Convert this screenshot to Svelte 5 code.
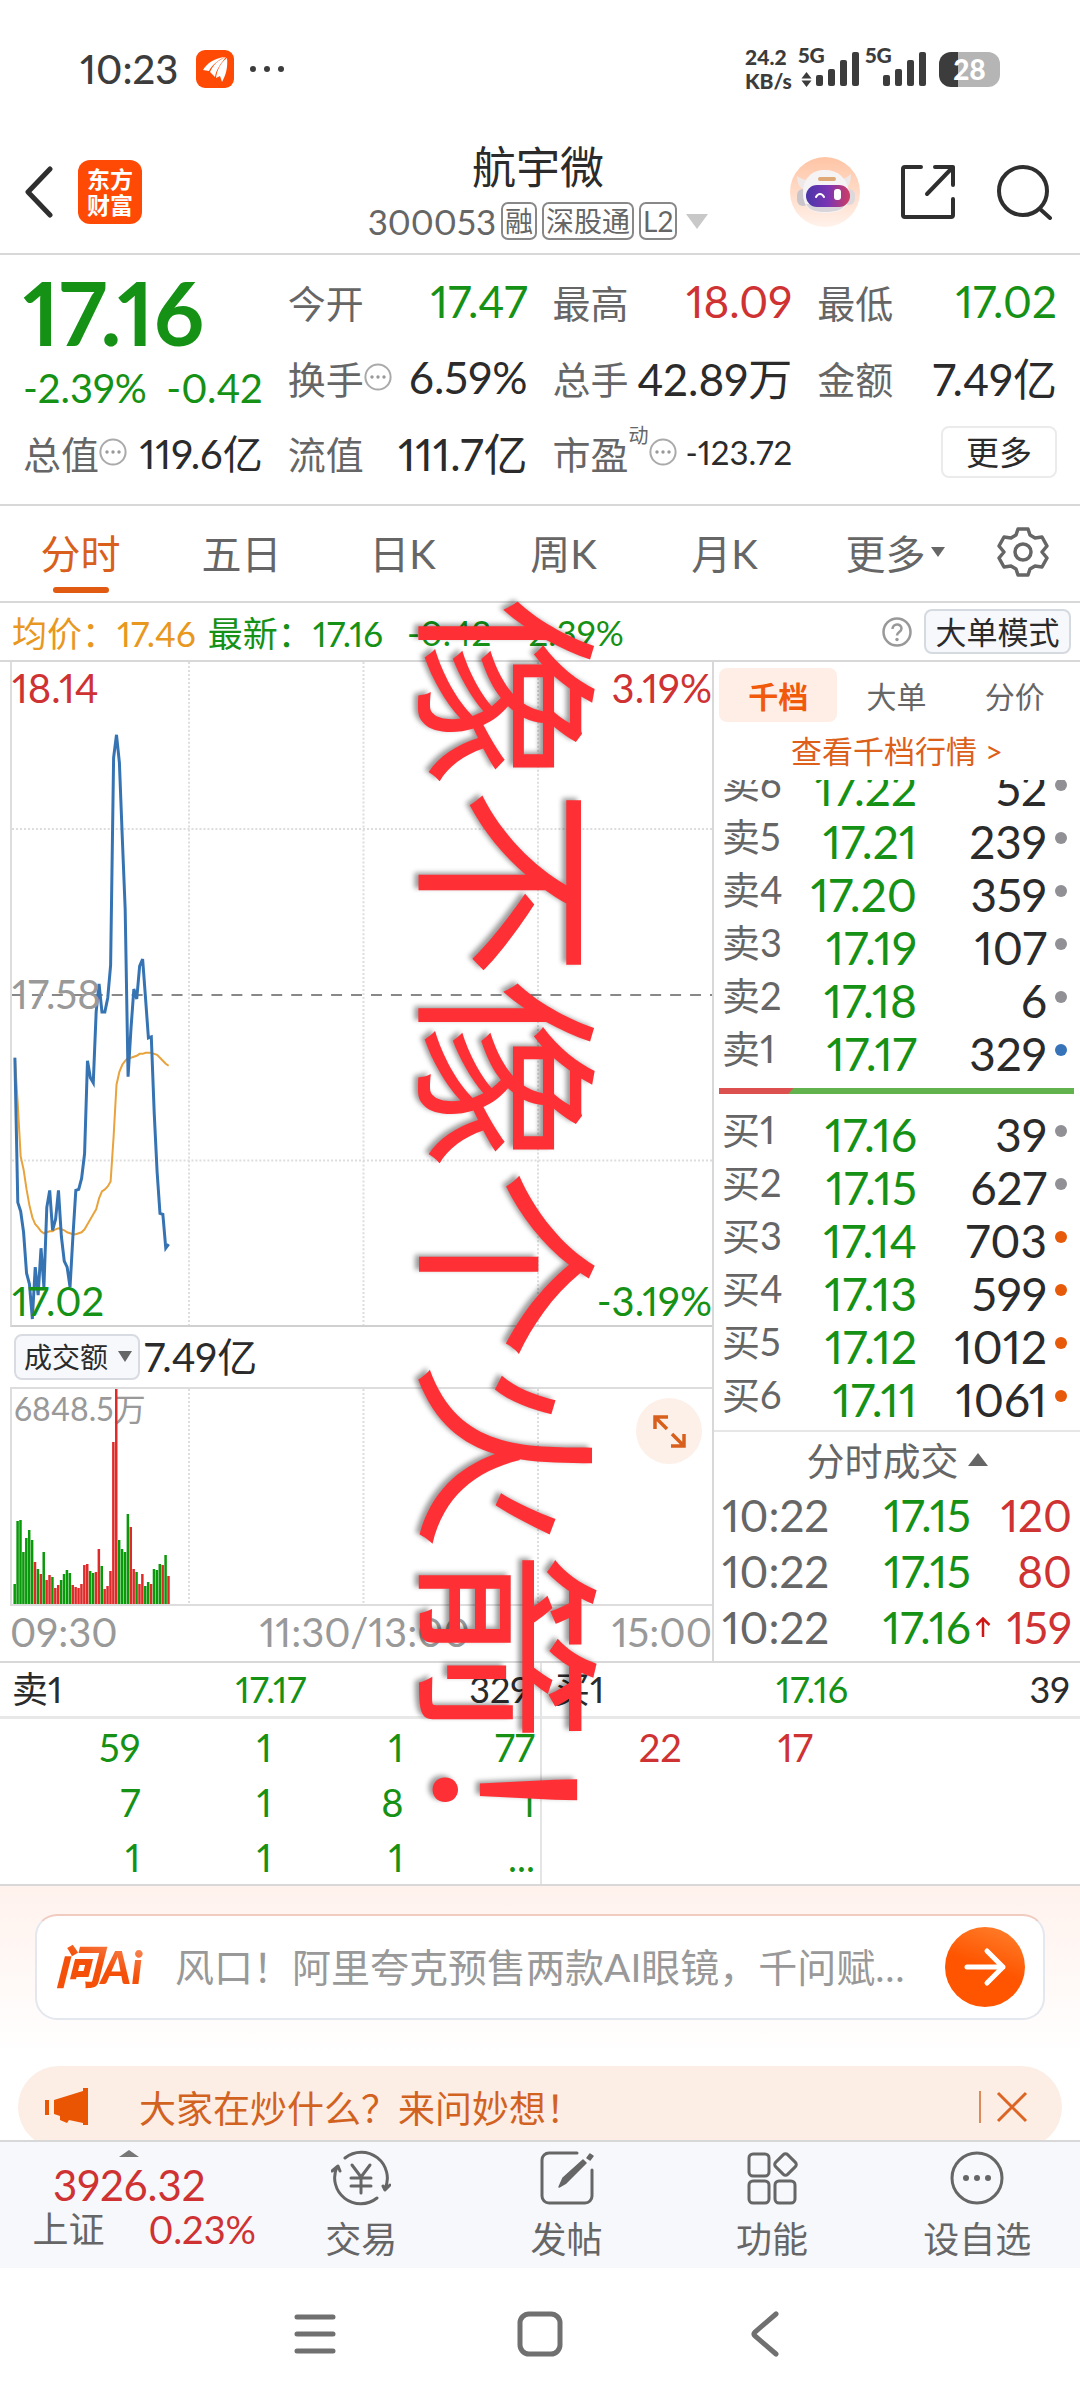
<script>
  const tabs = ["分时", "五日", "日K", "周K", "月K"];
  const sell = [
    { label: "卖6", price: "17.22", qty: 52, dot: "grey" },
    { label: "卖5", price: "17.21", qty: 239, dot: "grey" },
    { label: "卖4", price: "17.20", qty: 359, dot: "grey" },
    { label: "卖3", price: "17.19", qty: 107, dot: "grey" },
    { label: "卖2", price: "17.18", qty: 6, dot: "grey" },
    { label: "卖1", price: "17.17", qty: 329, dot: "blue" }
  ];
  const buy = [
    { label: "买1", price: "17.16", qty: 39, dot: "grey" },
    { label: "买2", price: "17.15", qty: 627, dot: "grey" },
    { label: "买3", price: "17.14", qty: 703, dot: "orange" },
    { label: "买4", price: "17.13", qty: 599, dot: "orange" },
    { label: "买5", price: "17.12", qty: 1012, dot: "orange" },
    { label: "买6", price: "17.11", qty: 1061, dot: "orange" }
  ];
  const trades = [
    { time: "10:22", price: "17.15", qty: 120 },
    { time: "10:22", price: "17.15", qty: 80 },
    { time: "10:22", price: "17.16", qty: 159, up: true }
  ];
  const sellQueue = [
    ["59", "1", "1", "77"],
    ["7", "1", "8", "1"],
    ["1", "1", "1", "..."]
  ];
  const buyQueue = [
    ["22", "17", "", ""],
    ["", "", "", ""],
    ["", "", "", ""]
  ];

  // one value per minute, measured down from the top of the chart
  const price = [
    397, 542, 551, 572, 613, 624, 659, 607, 635, 588, 627, 547, 530, 570, 559, 530, 576, 601, 607,
    627, 576, 530, 529, 518, 493, 400, 417, 422, 351, 323, 351, 351, 337, 304, 96, 73, 101, 176, 248,
    416, 368, 328, 338, 305, 298, 337, 377, 376, 452, 511, 553, 554, 588, 584
  ];
  const average = [
    397, 444, 496, 509, 529, 545, 557, 564, 567, 571, 573, 572, 571, 571, 569, 568, 569, 570, 572,
    573, 574, 574, 573, 572, 569, 564, 559, 554, 549, 538, 531, 529, 526, 521, 476, 424, 411, 404,
    400, 397, 397, 396, 395, 393, 393, 392, 392, 392, 393, 394, 397, 400, 403, 405
  ];
  const volume = [
    20, 83, 84, 52, 66, 74, 64, 42, 35, 30, 52, 24, 29, 27, 16, 19, 24, 30, 34, 31, 19, 17, 16, 20,
    39, 40, 33, 31, 32, 55, 38, 15, 18, 33, 162, 215, 64, 55, 52, 90, 77, 35, 32, 20, 30, 18, 22, 20,
    35, 34, 40, 39, 49, 28
  ];
  const direction = "gggggggrgrgrrgrrggggrrrrrrggrrgrrrrrggggrrgrrggrgggrgr";

  const minute = 2.91;
  const line = (values) => values.map((v, i) => `${((i + 1) * minute).toFixed(1)},${v}`).join(" ");
</script>

{#snippet more()}
  <svg class="info" viewBox="0 0 28 28" aria-hidden="true">
    <circle cx="14" cy="14" r="12.6" fill="none" stroke="#aaa" stroke-width="2" />
    <g fill="#999"><circle cx="8" cy="14" r="1.7" /><circle cx="14" cy="14" r="1.7" /><circle cx="20" cy="14" r="1.7" /></g>
  </svg>
{/snippet}

{#snippet book(rows)}
  <table class="book">
    <tbody>
      {#each rows as row}
        <tr>
          <th scope="row">{row.label}</th>
          <td class="green">{row.price}</td>
          <td>{row.qty}</td>
          <td class="dot-cell"><i class="dot {row.dot}"></i></td>
        </tr>
      {/each}
    </tbody>
  </table>
{/snippet}

{#snippet queue(label, value, qty, rows, color)}
  <div class="queue">
    <div class="queue-head">
      <span>{label}</span><span class="green">{value}</span><span>{qty}</span>
    </div>
    <table class={color}>
      <tbody>
        {#each rows as row}
          <tr>
            {#each row as cell}<td>{cell}</td>{/each}
          </tr>
        {/each}
      </tbody>
    </table>
  </div>
{/snippet}

<div class="page">
  <div class="status">
    <span class="clock">10:23</span>
    <svg class="app-badge" viewBox="0 0 38 38" aria-hidden="true">
      <rect width="38" height="38" rx="9" fill="#ff4a05" />
      <path d="M7 20C11 13 19 8 29 7 22 10 16 15 13 21zM14 22C17 15 22 10 30 7 25 13 20 20 19 27zM20 28C21 20 25 12 31 8 32 17 30 25 26 32L24 26z" fill="#fff" />
    </svg>
    <span class="dots"><i></i><i></i><i></i></span>
    <span class="speed">24.2<br />KB/s</span>
    <svg class="signal" viewBox="0 0 62 42" aria-hidden="true">
      <g fill="#3c3c3c">
        <path d="M8.500 24l5 6.500h-10zM8.500 39l5-6.500h-10z" />
        <rect x="18" y="27" width="7" height="11" rx="2" /><rect x="30" y="21" width="7" height="17" rx="2" />
        <rect x="42" y="12" width="7" height="26" rx="2" /><rect x="54" y="4" width="7" height="34" rx="2" />
      </g>
      <text x="0" y="15">5G</text>
    </svg>
    <svg class="signal second" viewBox="0 0 62 42" aria-hidden="true">
      <g fill="#3c3c3c">
        <rect x="18" y="27" width="7" height="11" rx="2" /><rect x="30" y="21" width="7" height="17" rx="2" />
        <rect x="42" y="12" width="7" height="26" rx="2" /><rect x="54" y="4" width="7" height="34" rx="2" />
      </g>
      <text x="0" y="15">5G</text>
    </svg>
    <span class="battery">28</span>
  </div>

  <header>
    <button class="back" aria-label="返回">
      <svg viewBox="0 0 30 52"><path d="M26 3L4 26l22 23" fill="none" stroke="#2f2f2f" stroke-width="5" stroke-linecap="round" stroke-linejoin="round" /></svg>
    </button>
    <a class="brand" href="#home">东方<br />财富</a>
    <div class="title">
      <h1>航宇微</h1>
      <div class="code">
        <span>300053</span><b>融</b><b>深股通</b><b>L2</b><i></i>
      </div>
    </div>
    <div class="actions">
      <button aria-label="助手">
        <svg width="70" height="70" viewBox="0 0 70 70">
          <defs>
            <linearGradient id="halo" x1="0" y1="0" x2="0" y2="1"><stop offset="0" stop-color="#ffc4a4" /><stop offset="1" stop-color="#fff2eb" /></linearGradient>
            <linearGradient id="visor"><stop offset="0" stop-color="#4a35a8" /><stop offset=".5" stop-color="#7a35b4" /><stop offset="1" stop-color="#cf3d62" /></linearGradient>
          </defs>
          <circle cx="35" cy="35" r="35" fill="url(#halo)" />
          <path d="M7 19c0 8 3 12 7 13l4-9c-5 0-8-2-11-4zM61 17c0 8-2 13-6 14l-5-9c5 0 8-2 11-5z" fill="#eee8e8" />
          <rect x="7" y="32" width="12" height="17" rx="6" fill="#c9c5cb" /><rect x="53" y="32" width="12" height="16" rx="6" fill="#dcd8dc" />
          <path d="M13 36c0-15 9-23 22-23s22 8 24 22c1 14-6 21-24 21-15 0-22-6-22-20z" fill="#f6f3f4" />
          <path d="M16 47c3 6 9 8 19 8s17-2 20-7z" fill="#d8d4d9" />
          <rect x="28" y="20" width="18" height="4" rx="2" fill="#dfa977" />
          <rect x="16" y="28" width="44" height="22" rx="11" fill="url(#visor)" />
          <path d="M26 40c2-4 6-4 8 0" fill="none" stroke="#fff" stroke-width="2" stroke-linecap="round" />
          <rect x="44" y="32" width="7" height="11" rx="3" fill="#fff" />
        </svg>
      </button>
      <button aria-label="分享">
        <svg width="56" height="56" viewBox="0 0 56 56" fill="none" stroke="#2f2f2f" stroke-width="4" stroke-linecap="round" stroke-linejoin="round">
          <path d="M21 3H5a2 2 0 0 0-2 2v46a2 2 0 0 0 2 2h46a2 2 0 0 0 2-2V35M35 3h18v18M53 3L27 30" />
        </svg>
      </button>
      <button aria-label="搜索">
        <svg width="56" height="56" viewBox="0 0 56 56" fill="none" stroke="#2f2f2f" stroke-width="4" stroke-linecap="round">
          <circle cx="27" cy="27" r="24" /><path d="M44 45l10 9" />
        </svg>
      </button>
    </div>
  </header>

  <section class="quote">
    <div class="last green">
      <strong>17.16</strong>
      <div><span>-2.39%</span><span>-0.42</span></div>
    </div>
    <div class="item"><span>今开</span><b class="green">17.47</b></div>
    <div class="item"><span>最高</span><b class="red">18.09</b></div>
    <div class="item"><span>最低</span><b class="green">17.02</b></div>
    <div class="item"><span>换手{@render more()}</span><b>6.59%</b></div>
    <div class="item"><span>总手</span><b>42.89万</b></div>
    <div class="item"><span>金额</span><b>7.49亿</b></div>
    <div class="item"><span>总值{@render more()}</span><b class="mid">119.6亿</b></div>
    <div class="item"><span>流值</span><b>111.7亿</b></div>
    <div class="item"><span>市盈<sup>动</sup>{@render more()}</span><b class="small">-123.72</b></div>
    <div class="item end"><button>更多</button></div>
  </section>

  <nav class="tabs">
    {#each tabs as tab, i}
      <button class:active={i === 0}>{tab}</button>
    {/each}
    <button>更多<i></i></button>
    <button aria-label="设置">
      <svg width="52" height="52" viewBox="0 0 52 52" fill="none" stroke="#666" stroke-width="3.500" stroke-linejoin="round">
        <path d="M21 3h10l2 6 5 3 7-1 5 9-5 6 5 6-5 9-7-1-5 3-2 6H21l-2-6-5-3-7 1-5-9 5-6-5-6 5-9 7 1 5-3z" />
        <circle cx="26" cy="26" r="8" />
      </svg>
    </button>
  </nav>

  <div class="summary">
    <span class="avg">均价：17.46</span>
    <span class="green">最新：17.16</span>
    <span class="green diff">-0.42</span>
    <span class="green diff">-2.39%</span>
    <svg class="help" viewBox="0 0 30 30" aria-hidden="true">
      <circle cx="15" cy="15" r="13.500" fill="none" stroke="#999" stroke-width="2.500" />
      <path d="M10.500 12c0-6 9-6 9-.5 0 3.500-4.500 3.500-4.500 7" fill="none" stroke="#999" stroke-width="2.500" /><circle cx="15" cy="22.500" r="1.700" fill="#999" />
    </svg>
    <button>大单模式</button>
  </div>

  <main>
    <section class="charts">
      <div class="price-chart">
        <svg viewBox="0 0 702 665" preserveAspectRatio="none" role="img" aria-label="分时走势">
          <g stroke="#ddd" stroke-width="2" stroke-dasharray="2 2">
            <path d="M177.500 0V665M352.500 0V665M527.500 0V665M0 167.500H702M0 500H702" />
          </g>
          <path d="M0 334H702" stroke="#888" stroke-width="2" stroke-dasharray="11 9" />
          <polyline points={line(average)} fill="none" stroke="#e8a33c" stroke-width="2" />
          <polyline points={line(price)} fill="none" stroke="#3673b3" stroke-width="3" />
        </svg>
        <span class="top left red">18.14</span>
        <span class="top right red">3.19%</span>
        <span class="middle left">17.58</span>
        <span class="bottom left green">17.02</span>
        <span class="bottom right green">-3.19%</span>
      </div>
      <div class="metric">
        <label>
          <select aria-label="指标"><option>成交额</option></select>
          <i></i>
        </label>
        <span>7.49亿</span>
      </div>
      <div class="volume-chart">
        <span>6848.5万</span>
        <svg viewBox="0 0 702 215" preserveAspectRatio="none" role="img" aria-label="成交额">
          <path d="M177.500 0V215M352.500 0V215M527.500 0V215" stroke="#ddd" stroke-width="2" stroke-dasharray="2 2" />
          {#each volume as v, i}
            <rect x={(i + 0.5) * minute} y={215 - v} width="2.500" height={v} fill={direction[i] === "g" ? "#0a990a" : "#e02a2a"} />
          {/each}
        </svg>
        <button aria-label="全屏">
          <svg viewBox="0 0 66 66" fill="none" stroke="#d9601c" stroke-width="3.500">
            <path d="M19 31V19h13M19 19l12 12M35 48h13V36M48 48L36 36" />
          </svg>
        </button>
      </div>
      <div class="axis"><span>09:30</span><span>11:30/13:00</span><span>15:00</span></div>
    </section>

    <section class="depth">
      <div class="depth-tabs">
        <button class="active">千档</button>
        <button>大单</button>
        <button>分价</button>
      </div>
      <a class="depth-link" href="#depth">查看千档行情 &gt;</a>
      <div class="sell">{@render book(sell)}</div>
      <div class="ratio"><i></i></div>
      {@render book(buy)}
      <button class="trades-head">分时成交<i></i></button>
      <table class="trades">
        <tbody>
          {#each trades as trade}
            <tr>
              <td>{trade.time}</td>
              <td class="green">{trade.price}</td>
              <td class="arrow">
                {#if trade.up}
                  <svg viewBox="0 0 16 22" aria-label="上涨"><path d="M8 21V3M1.500 9L8 2.500 14.500 9" fill="none" stroke="#d01515" stroke-width="2.500" /></svg>
                {/if}
              </td>
              <td class="red">{trade.qty}</td>
            </tr>
          {/each}
        </tbody>
      </table>
    </section>
  </main>

  <section class="queues">
    {@render queue("卖1", "17.17", 329, sellQueue, "green")}
    {@render queue("买1", "17.16", 39, buyQueue, "red")}
  </section>

  <section class="ask">
    <form>
      <span class="ask-logo">问Ai</span>
      <input type="text" aria-label="提问" placeholder="风口！阿里夸克预售两款AI眼镜，千问赋能新一代智能终端" />
      <button type="button" aria-label="发送">
        <svg viewBox="0 0 80 80" fill="none" stroke="#fff" stroke-width="5" stroke-linecap="round" stroke-linejoin="round"><path d="M22 40h36M42 24l16 16-16 16" /></svg>
      </button>
    </form>
    <div class="notice">
      <svg width="44" height="38" viewBox="0 0 44 38" aria-hidden="true">
        <path d="M0 12h4v15H0zM9 12l29-9V0h5v37h-5v-2l-14-3-2 3-7-3v-4l-6-2z" fill="#ea5504" />
      </svg>
      <span>大家在炒什么？来问妙想！</span>
      <button aria-label="关闭">
        <svg width="32" height="32" viewBox="0 0 32 32"><path d="M2 2l28 28M30 2L2 30" stroke="#dc6526" stroke-width="3" /></svg>
      </button>
    </div>
  </section>

  <footer>
    <a class="index" href="#index">
      <i></i>
      <span class="red points">3926.32</span>
      <span class="change">上证<span class="red">0.23%</span></span>
    </a>
    <button>
      <svg viewBox="0 0 60 56">
        <path d="M14 8A26 26 0 0 1 54 39M46 48A26 26 0 0 1 6 17M1 21l6-5 2 5M59 35l-5 5-2-4" />
        <path d="M21 15l9 12 9-12M30 27v16M20 28h20M20 36h20" />
      </svg>
      交易
    </button>
    <button>
      <svg viewBox="0 0 60 56">
        <path d="M40 3H12a7 7 0 0 0-7 7v36a7 7 0 0 0 7 7h36a7 7 0 0 0 7-7V20" />
        <path d="M22 37l4-9 20-18 3 3-20 20zM50 8l3-4 3 2-3 4z" fill="#666" stroke-width="1.500" />
      </svg>
      发帖
    </button>
    <button>
      <svg viewBox="0 0 60 56">
        <rect x="7" y="4" width="20" height="22" rx="4" /><rect x="7" y="31" width="20" height="22" rx="4" /><rect x="33" y="31" width="20" height="22" rx="4" />
        <rect x="35" y="6" width="17" height="17" rx="3" transform="rotate(45 43.500 14.500)" />
      </svg>
      功能
    </button>
    <button>
      <svg viewBox="0 0 60 56">
        <circle cx="30" cy="28" r="25" />
        <g fill="#666" stroke="none"><circle cx="19" cy="28" r="3" /><circle cx="30" cy="28" r="3" /><circle cx="41" cy="28" r="3" /></g>
      </svg>
      设自选
    </button>
  </footer>

  <div class="system">
    <button aria-label="最近任务"><svg viewBox="0 0 48 48"><path d="M6 7h36M6 24h36M6 41h36" /></svg></button>
    <button aria-label="主屏幕"><svg viewBox="0 0 48 48"><rect x="4" y="4" width="40" height="40" rx="9" /></svg></button>
    <button aria-label="后退"><svg viewBox="0 0 48 48"><path d="M35 4L14 22q-2 2 0 4L35 44" /></svg></button>
  </div>

  <div class="caption">像不像个火箭！</div>
</div>

<style>
  :global(body) {
    background: #fff;
  }

  .page {
    position: relative;
    font-family: Lato, "Noto Sans CJK SC", sans-serif;
    font-variant-numeric: proportional-nums;
    color: #2b2b2b;
    overflow: hidden;
  }

  button {
    font: inherit;
    color: inherit;
    background: none;
    border: 0;
    padding: 0;
    margin: 0;
  }

  a {
    color: inherit;
    text-decoration: none;
  }

  svg {
    display: block;
  }

  table {
    border-collapse: collapse;
    table-layout: fixed;
    width: 100%;
  }

  th,
  td {
    padding: 0;
    font-weight: 400;
    text-align: right;
  }

  .green {
    color: #159115;
  }
  .red {
    color: #cf3232;
  }

  /* status bar */
  .status {
    height: 138px;
    box-sizing: border-box;
    padding: 0 80px;
    display: flex;
    align-items: center;
    color: #3c3c3c;
  }
  .clock {
    font-size: 40px;
    font-weight: 500;
  }
  .app-badge {
    width: 38px;
    height: 38px;
    margin-left: 18px;
  }
  .dots {
    display: flex;
    gap: 8px;
    margin-left: 16px;
  }
  .dots i {
    width: 6px;
    height: 6px;
    border-radius: 50%;
    background: #3c3c3c;
  }
  .speed {
    margin-left: auto;
    font-size: 21px;
    font-weight: 900;
    line-height: 24px;
    width: 53px;
  }
  .signal {
    width: 62px;
    height: 42px;
    margin-right: 5px;
    overflow: visible;
  }
  .signal.second {
    margin-right: 12px;
  }
  .signal text {
    font-size: 21px;
    font-weight: 900;
    fill: #3c3c3c;
  }
  .battery {
    width: 61px;
    height: 35px;
    border-radius: 12px;
    background: linear-gradient(90deg, #3c3c3c 19px, #b5b5b5 19px);
    color: #fff;
    font-size: 28px;
    font-weight: 900;
    line-height: 35px;
    text-align: center;
  }

  /* title bar */
  header {
    display: grid;
    grid-template-areas: "left title right";
    grid-template-columns: 1fr auto 1fr;
    align-items: center;
    height: 103px;
    padding: 0 28px 12px 24px;
    border-bottom: 2px solid #d8d8d8;
  }
  .back {
    grid-area: left;
    justify-self: start;
  }
  .back svg {
    width: 30px;
    height: 52px;
  }
  .brand {
    grid-area: left;
    justify-self: start;
    margin-left: 54px;
    width: 64px;
    height: 64px;
    box-sizing: border-box;
    padding-top: 6px;
    border-radius: 12px;
    background: #ff4a05;
    color: #fff;
    font-size: 23px;
    font-weight: 700;
    line-height: 26px;
    text-align: center;
  }
  .title {
    grid-area: title;
    text-align: center;
  }
  h1 {
    margin: 0;
    font-size: 44px;
    font-weight: 400;
    line-height: 58px;
  }
  .code {
    display: flex;
    align-items: center;
    gap: 5px;
    height: 50px;
    color: #666;
    font-size: 35px;
  }
  .code b {
    height: 34px;
    padding: 0 2px;
    border: 2px solid #888;
    border-radius: 7px;
    font-size: 28px;
    font-weight: 400;
    line-height: 34px;
  }
  .code i {
    margin-left: 4px;
    border: 11px solid transparent;
    border-top: 15px solid #c8c8c8;
    border-bottom: 0;
  }
  .actions {
    grid-area: right;
    justify-self: end;
    display: flex;
    align-items: center;
    gap: 40px;
  }

  /* quote */
  .quote {
    display: grid;
    grid-template-columns: repeat(4, 1fr);
    grid-template-rows: 76px 76px 74px;
    column-gap: 25px;
    padding: 8px 23px 15px;
    border-bottom: 2px solid #d8d8d8;
  }
  .last {
    grid-row: span 2;
  }
  .last strong {
    display: block;
    font-size: 88px;
    line-height: 98px;
  }
  .last div {
    display: flex;
    justify-content: space-between;
    font-size: 40px;
    line-height: 54px;
  }
  .item {
    display: flex;
    align-items: center;
    justify-content: space-between;
    white-space: nowrap;
  }
  .item span {
    display: flex;
    align-items: center;
    font-size: 38px;
    color: #666;
  }
  .item b {
    font-size: 44px;
    font-weight: 400;
  }
  .item .mid {
    font-size: 40px;
  }
  .item .small {
    font-size: 33px;
  }
  .item sup {
    font-size: 20px;
    line-height: 20px;
    align-self: flex-start;
  }
  .info {
    width: 28px;
    height: 28px;
  }
  .item.end {
    justify-content: flex-end;
  }
  .item button {
    width: 116px;
    height: 52px;
    border: 2px solid #ebebeb;
    border-radius: 8px;
    font-size: 33px;
    line-height: 44px;
  }

  /* period tabs */
  .tabs {
    display: grid;
    grid-template-columns: repeat(5, 161fr) 180fr 75fr;
    height: 95px;
    padding-right: 20px;
    border-bottom: 2px solid #d8d8d8;
    color: #666;
    font-size: 40px;
  }
  .tabs button {
    position: relative;
    display: flex;
    align-items: center;
    justify-content: center;
    padding-bottom: 4px;
  }
  .tabs .active {
    color: #d9601c;
  }
  .tabs .active::after {
    content: "";
    position: absolute;
    bottom: 8px;
    width: 56px;
    height: 6px;
    border-radius: 3px;
    background: #e05a12;
  }
  .tabs i {
    margin-left: 5px;
    border: 7px solid transparent;
    border-top: 10px solid #666;
    border-bottom: 0;
  }

  .summary {
    display: flex;
    align-items: center;
    height: 57px;
    padding: 0 9px 0 12px;
    border-bottom: 2px solid #d8d8d8;
    font-size: 35px;
    white-space: nowrap;
  }
  .avg {
    color: #e8981e;
    margin-right: 12px;
  }
  .diff {
    margin-left: 24px;
  }
  .help {
    width: 30px;
    height: 30px;
    margin: 0 12px 0 auto;
  }
  .summary button {
    width: 147px;
    height: 45px;
    border: 2px solid #d5d9e0;
    border-radius: 8px;
    background: #f7f8fb;
    font-size: 31px;
    line-height: 38px;
  }

  /* charts */
  main {
    display: grid;
    grid-template-columns: 714fr 366fr;
    border-bottom: 2px solid #d8d8d8;
  }
  .charts {
    padding-left: 10px;
    border-right: 2px solid #d8d8d8;
  }
  .price-chart {
    position: relative;
    border-left: 2px solid #ddd;
    border-bottom: 2px solid #d0d0d0;
    font-size: 40px;
    line-height: 40px;
  }
  .price-chart svg {
    width: 100%;
    height: 663px;
  }
  .price-chart span {
    position: absolute;
  }
  .left {
    left: 0;
  }
  .right {
    right: 0;
  }
  .top {
    top: 6px;
  }
  .middle {
    top: 312px;
    color: #999;
  }
  .bottom {
    bottom: 4px;
  }
  .metric {
    display: flex;
    align-items: center;
    gap: 4px;
    height: 60px;
    padding-left: 4px;
    font-size: 40px;
    line-height: 56px;
  }
  .metric label {
    position: relative;
  }
  .metric select {
    display: block;
    appearance: none;
    width: 126px;
    height: 46px;
    padding: 0 0 0 8px;
    border: 2px solid #d8dbe2;
    border-radius: 8px;
    background: #f7f8fb;
    color: #2b2b2b;
    font-family: inherit;
    font-size: 28px;
  }
  .metric i {
    position: absolute;
    right: 8px;
    top: 17px;
    border: 7px solid transparent;
    border-top: 11px solid #666;
    border-bottom: 0;
  }
  .volume-chart {
    position: relative;
    border: 2px solid #ddd;
    border-right: 0;
  }
  .volume-chart > svg {
    position: relative;
    width: 100%;
    height: 215px;
  }
  .volume-chart > span {
    position: absolute;
    left: 2px;
    top: 0;
    color: #999;
    font-size: 32px;
    line-height: 40px;
  }
  .volume-chart button {
    position: absolute;
    right: 10px;
    top: 9px;
    width: 66px;
    height: 66px;
    border-radius: 50%;
    background: #fdf0e9;
  }
  .axis {
    display: flex;
    justify-content: space-between;
    height: 55px;
    color: #999;
    font-size: 40px;
    line-height: 53px;
  }

  /* order book */
  .depth {
    display: flex;
    flex-direction: column;
  }
  .depth-tabs {
    display: grid;
    grid-template-columns: repeat(3, 1fr);
    height: 54px;
    padding: 6px 6px 0 5px;
    color: #666;
    font-size: 30px;
  }
  .depth-tabs .active {
    border-radius: 8px;
    background: #feeee6;
    color: #f05a0a;
    font-weight: 700;
  }
  .depth-link {
    height: 58px;
    color: #dc5f1a;
    font-size: 31px;
    line-height: 58px;
    text-align: center;
  }
  .sell {
    display: flex;
    align-items: flex-end;
    height: 300px;
    overflow: hidden;
  }
  .book {
    font-size: 46px;
    line-height: 53px;
  }
  .book tr {
    height: 53px;
  }
  .book th {
    width: 88px;
    padding-left: 8px;
    color: #666;
    font-size: 38px;
    text-align: left;
    line-height: 42px;
    vertical-align: top;
  }
  .book td:nth-child(2) {
    width: 107px;
  }
  .book .dot-cell {
    width: 33px;
    vertical-align: top;
  }
  .dot {
    display: block;
    width: 12px;
    height: 12px;
    margin: 17px 0 0 8px;
    border-radius: 50%;
  }
  .dot.grey {
    background: #909095;
  }
  .dot.blue {
    background: #3673b8;
  }
  .dot.orange {
    background: #e65a0a;
  }
  .ratio {
    height: 6px;
    margin: 8px 6px 14px 5px;
    background: #62b34d;
  }
  .ratio i {
    display: block;
    width: 21%;
    height: 6px;
    background: #dc5050;
    clip-path: polygon(0 0, 100% 0, 93% 100%, 0 100%);
  }
  .trades-head {
    display: flex;
    align-items: center;
    justify-content: center;
    gap: 9px;
    height: 57px;
    margin-top: 4px;
    border-top: 2px solid #e6e6e6;
    color: #666;
    font-size: 38px;
    line-height: 50px;
  }
  .trades-head i {
    border: 10px solid transparent;
    border-bottom: 13px solid #666;
    border-top: 0;
  }
  .trades {
    font-size: 44px;
    line-height: 56px;
  }
  .trades tr {
    height: 56px;
  }
  .trades td:first-child {
    width: 130px;
    padding-left: 8px;
    color: #666;
    text-align: left;
  }
  .trades .arrow {
    width: 24px;
  }
  .trades .arrow svg {
    width: 16px;
    height: 22px;
    margin-left: 4px;
  }
  .trades td:last-child {
    width: 77px;
    padding-right: 8px;
  }

  /* queues */
  .queues {
    display: grid;
    grid-template-columns: 1fr 1fr;
    border-bottom: 2px solid #d8d8d8;
    font-size: 38px;
  }
  .queue + .queue {
    border-left: 2px solid #e4e4e4;
  }
  .queue-head {
    display: grid;
    grid-template-columns: 1fr 1fr 1fr;
    height: 53px;
    padding: 0 10px 0 12px;
    border-bottom: 3px solid #e8e8e8;
    line-height: 52px;
    font-size: 36px;
  }
  .queue-head span:nth-child(2) {
    text-align: center;
  }
  .queue-head span:last-child {
    text-align: right;
  }
  .queue tr {
    height: 55px;
  }
  .queue td {
    padding-right: 5px;
    line-height: 54px;
  }
  .queue td:first-child {
    width: 26%;
  }

  /* ask */
  .ask {
    height: 254px;
    overflow: hidden;
    background: linear-gradient(#fff2ed, #fff 170px);
  }
  .ask form {
    display: flex;
    align-items: center;
    height: 102px;
    margin: 28px 35px 0;
    padding: 0 18px;
    border: 2px solid #e3e7ee;
    border-top-color: #f1cbc0;
    border-radius: 22px;
    background: #fff;
  }
  .ask-logo {
    width: 102px;
    background: linear-gradient(20deg, #f4500a 50%, #f9a27c);
    background-clip: text;
    color: transparent;
    font-size: 46px;
    font-style: italic;
    font-weight: 900;
    line-height: 60px;
  }
  .ask input {
    flex: 1;
    min-width: 0;
    margin: 0 20px 0 18px;
    padding: 0;
    border: 0;
    outline: 0;
    background: none;
    font-family: inherit;
    font-size: 39px;
    text-overflow: ellipsis;
  }
  .ask input::placeholder {
    color: #999;
    opacity: 1;
  }
  .ask form button {
    width: 80px;
    height: 80px;
    border-radius: 50%;
    background: linear-gradient(20deg, #ff5500 50%, #ff8330);
  }
  .notice {
    display: flex;
    align-items: center;
    height: 82px;
    margin: 46px 18px 0;
    padding: 0 34px 0 27px;
    border-radius: 41px;
    background: #fceee5;
    color: #d2621f;
    font-size: 37px;
  }
  .notice span {
    margin-left: 50px;
  }
  .notice button {
    margin-left: auto;
    padding-left: 15px;
    border-left: 2px solid #dc8a58;
  }

  /* bottom bar */
  footer {
    display: grid;
    grid-template-columns: 258fr repeat(4, 205fr);
    height: 126px;
    border-top: 2px solid #d8d8d8;
    background: #f7f8fb;
    color: #666;
    font-size: 36px;
  }
  footer button {
    display: flex;
    flex-direction: column;
    align-items: center;
    gap: 11px;
    padding-top: 8px;
    line-height: 44px;
  }
  footer button svg {
    width: 60px;
    height: 56px;
    fill: none;
    stroke: #666;
    stroke-width: 3;
    stroke-linecap: round;
    stroke-linejoin: round;
  }
  .index {
    display: flex;
    flex-direction: column;
    align-items: center;
    padding-top: 8px;
  }
  .index i {
    border: 10px solid transparent;
    border-bottom: 7px solid #777;
    border-top: 0;
  }
  .points {
    font-size: 42px;
    line-height: 48px;
    padding-top: 4px;
  }
  .change {
    display: flex;
    gap: 44px;
    margin-left: 30px;
    line-height: 40px;
  }
  .change .red {
    font-size: 38px;
  }

  .system {
    display: grid;
    grid-template-columns: 1fr 225px 225px 225px 1fr;
    align-items: center;
    height: 132px;
  }
  .system button:first-child {
    grid-column: 2;
  }
  .system svg {
    width: 48px;
    height: 48px;
    margin: 0 auto;
    fill: none;
    stroke: #707070;
    stroke-width: 5;
    stroke-linecap: round;
  }

  /* red note written down the chart, glyphs turned sideways */
  .caption {
    position: absolute;
    top: 596px;
    left: 39%;
    writing-mode: vertical-rl;
    text-orientation: sideways;
    color: #ff3035;
    font-family: "Noto Sans CJK SC", sans-serif;
    font-size: 191px;
    font-weight: 400;
    line-height: 192px;
    white-space: nowrap;
    text-shadow: -2px 4px 5px rgba(0, 0, 0, 0.4);
    pointer-events: none;
  }
</style>
